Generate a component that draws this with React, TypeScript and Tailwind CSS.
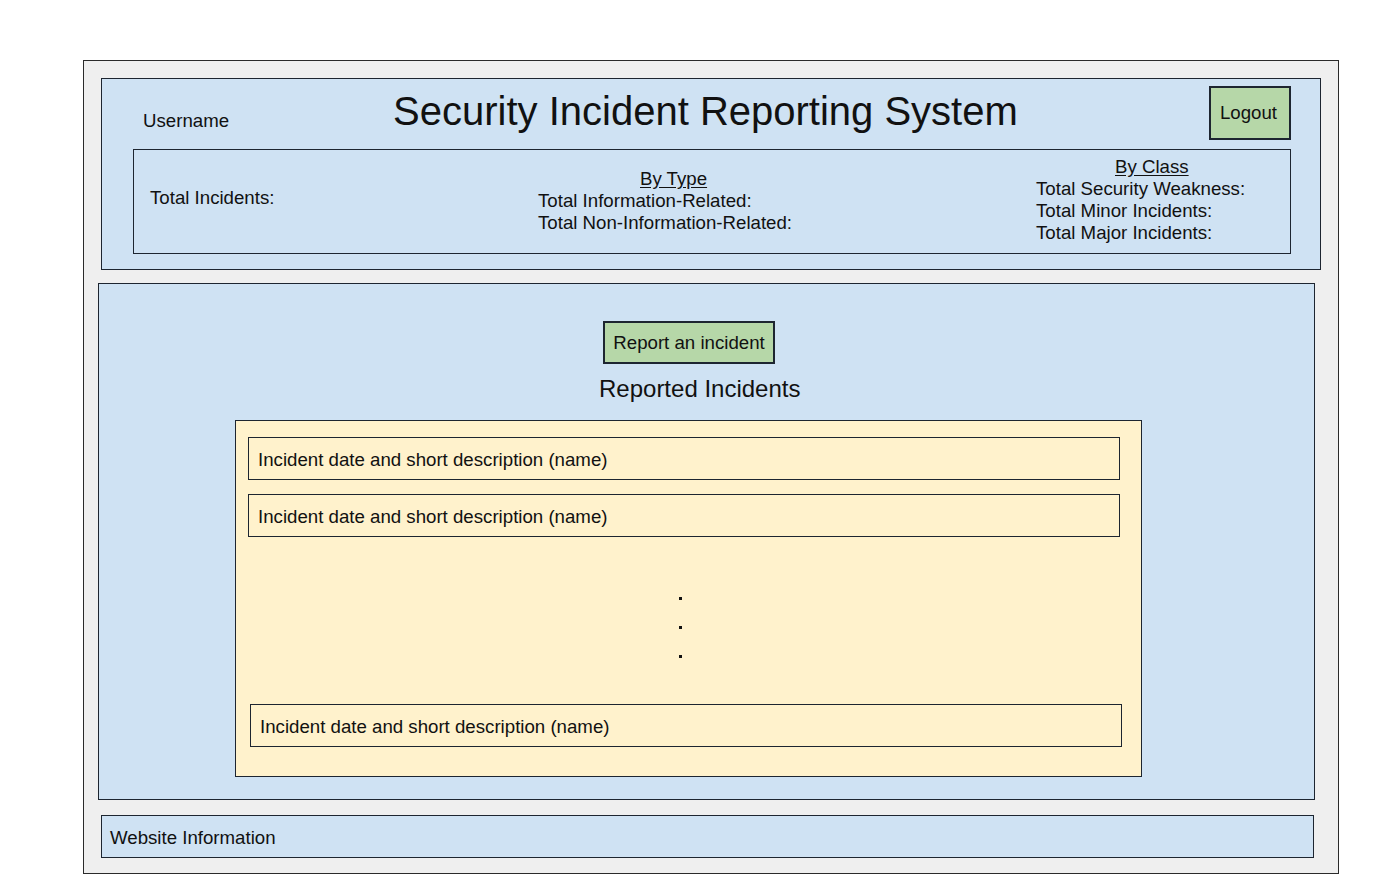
const font = { fontFamily: '"Liberation Sans", Arial, sans-serif' };

function IncidentRow({ className }: { className: string }) {
  return (
    <div
      className={`h-[43px] w-[872px] border border-[#1d2530] bg-[#fff2cc] pl-[9px] text-[18.67px] leading-[43px] text-[#111] ${className}`}
    >
      Incident date and short description (name)
    </div>
  );
}

export default function App() {
  return (
    <div className="min-h-screen w-full bg-white pt-[60px]" style={font}>
      <div className="ml-[83px] w-[1256px] border border-[#2a2a2a] bg-[#efefef] pt-[17px] pb-[15px] text-[#111]">
        {/* header */}
        <div className="ml-[17px] h-[192px] w-[1220px] border border-[#1d2530] bg-[#cfe2f3]">
          <div className="flex h-[70px] items-start">
            <div className="ml-[41px] mt-[31px] text-[18.67px] leading-[22px]">Username</div>
            <h1 className="ml-[164px] mt-[8px] text-[40px] leading-[48px]">
              Security Incident Reporting System
            </h1>
            <button className="ml-auto mr-[29px] mt-[7px] h-[54px] w-[82px] border-2 border-[#1d2530] bg-[#b6d7a8] pr-[3px] text-[18.67px] text-[#111]">
              Logout
            </button>
          </div>
          <div className="ml-[31px] flex h-[105px] w-[1158px] border border-[#1d2530] text-[18.67px] leading-[22px]">
            <div className="ml-[16px] mt-[37px] w-[388px]">Total Incidents:</div>
            <div className="mt-[18px] w-[498px]">
              <div className="pl-[102px] underline underline-offset-2">By Type</div>
              <div>Total Information-Related:</div>
              <div>Total Non-Information-Related:</div>
            </div>
            <div className="mt-[6px]">
              <div className="pl-[79px] underline underline-offset-2">By Class</div>
              <div>Total Security Weakness:</div>
              <div>Total Minor Incidents:</div>
              <div>Total Major Incidents:</div>
            </div>
          </div>
        </div>

        {/* main */}
        <div className="ml-[14px] mt-[13px] h-[517px] w-[1217px] border border-[#1d2530] bg-[#cfe2f3] pt-[37px]">
          <button className="ml-[504px] h-[43px] w-[172px] border-2 border-[#1d2530] bg-[#b6d7a8] text-[18.67px] leading-[39px] text-[#111]">
            Report an incident
          </button>
          <div className="ml-[500px] mt-[10px] text-[24px] leading-[30px]">Reported Incidents</div>
          <div className="ml-[136px] mt-[16px] h-[357px] w-[907px] border border-[#1d2530] bg-[#fff2cc] pt-[16px]">
            <IncidentRow className="ml-[12px]" />
            <IncidentRow className="ml-[12px] mt-[14px]" />
            <div className="ml-[443px] flex h-[167px] flex-col gap-[26px] pt-[60px]">
              <div className="h-[3px] w-[3px] bg-[#111]" />
              <div className="h-[3px] w-[3px] bg-[#111]" />
              <div className="h-[3px] w-[3px] bg-[#111]" />
            </div>
            <IncidentRow className="ml-[14px]" />
          </div>
        </div>

        {/* footer */}
        <div className="ml-[17px] mt-[15px] h-[43px] w-[1213px] border border-[#1d2530] bg-[#cfe2f3] pl-[8px] text-[18.67px] leading-[43px]">
          Website Information
        </div>
      </div>
    </div>
  );
}
